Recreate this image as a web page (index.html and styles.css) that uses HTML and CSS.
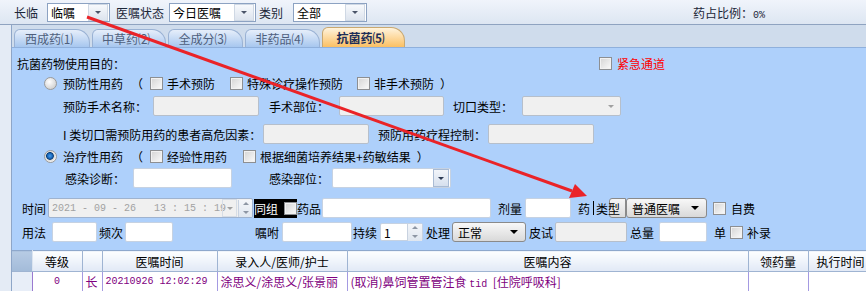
FILE: index.html
```html
<!DOCTYPE html>
<html lang="zh-CN">
<head>
    <meta charset="UTF-8">
    <link rel="stylesheet" href="styles.css">
</head>
<body>
    <div class="topbar">
        <span class="lbl">长临</span>
        <div class="combo c-type"><span>临嘱</span><i class="drop"></i></div>
        <span class="lbl ml6">医嘱状态</span>
        <div class="combo c-state"><span>今日医嘱</span><i class="drop"></i></div>
        <span class="lbl ml3">类别</span>
        <div class="combo c-cat"><span>全部</span><i class="drop"></i></div>
        <span class="ratio">药占比例：<span class="mono">0%</span></span>
    </div>

    <div class="wrap">
        <div class="side"></div>
        <div class="main">
            <!-- tab strip -->
            <div class="tabs">
                <div class="tab t1">西成药⑴</div>
                <div class="tab t2">中草药⑵</div>
                <div class="tab t3">全成分⑶</div>
                <div class="tab t4">非药品⑷</div>
                <div class="tab active">抗菌药⑸</div>
            </div>

            <div class="panel">
                <div class="row r1">
                    <span>抗菌药物使用目的：</span>
                    <i class="cb ml474"></i>
                    <span class="urgent">紧急通道</span>
                </div>
                <div class="row r2">
                    <i class="radio"></i>
                    <span class="ml6">预防性用药</span>
                    <span class="ml8">（</span>
                    <i class="cb ml7"></i><span class="ml4">手术预防</span>
                    <i class="cb ml15"></i><span class="ml4">特殊诊疗操作预防</span>
                    <i class="cb ml14"></i><span class="ml4">非手术预防</span>
                    <span class="ml6">）</span>
                </div>
                <div class="row r3">
                    <span class="w90">预防手术名称：</span>
                    <span class="field off w106"></span>
                    <span class="ml10 w70">手术部位：</span>
                    <span class="field off w105"></span>
                    <span class="ml9 w69">切口类型：</span>
                    <span class="field off w99 pick"><i class="tri grey"></i></span>
                </div>
                <div class="row r4">
                    <span class="w200">I 类切口需预防用药的患者高危因素：</span>
                    <span class="field off w106"></span>
                    <span class="ml9 w110">预防用药疗程控制：</span>
                    <span class="field off w106"></span>
                </div>
                <div class="row r5">
                    <i class="radio on"></i>
                    <span class="ml6">治疗性用药</span>
                    <span class="ml8">（</span>
                    <i class="cb ml7"></i><span class="ml4">经验性用药</span>
                    <i class="cb ml16"></i><span class="ml4">根据细菌培养结果+药敏结果</span>
                    <span class="ml6">）</span>
                </div>
                <div class="row r6">
                    <span class="w68">感染诊断：</span>
                    <span class="field w99"></span>
                    <span class="ml37 w63">感染部位：</span>
                    <span class="field w119 pick"><i class="btn"><i class="tri"></i></i></span>
                </div>
                <div class="row r7">
                    <span class="w26">时间</span>
                    <span class="field date">
                        <span class="stamp">2021 - 09 - 26&nbsp;&nbsp;&nbsp;13 : 15 : 19</span>
                        <i class="dbtn"><i class="tri grey"></i></i>
                        <i class="spin"><i class="up"></i><i class="down"></i></i>
                    </span>
                    <span class="group ml1"><span>同组</span><i class="cb"></i></span>
                    <span class="w25">药品</span>
                    <span class="field w169"></span>
                    <span class="ml7 w27">剂量</span>
                    <span class="field w46"></span>
                    <span class="ml7">药</span><i class="caret"></i>
                    <span class="mini"></span>
                    <span class="overlap">类型</span>
                    <span class="sel w79 ml6">普通医嘱<i class="tri dark"></i></span>
                    <i class="cb ml6"></i>
                    <span class="ml5">自费</span>
                </div>
                <div class="row r8">
                    <span class="w30">用法</span>
                    <span class="field w45"></span>
                    <span class="ml2 w26">频次</span>
                    <span class="field w48"></span>
                    <span class="ml82 w27">嘱咐</span>
                    <span class="field w70"></span>
                    <span class="ml1 w27">持续</span>
                    <span class="field w43 num">1<i class="spin"><i class="up"></i><i class="down"></i></i></span>
                    <span class="ml3 w26">处理</span>
                    <span class="sel w72">正常<i class="tri dark"></i></span>
                    <span class="ml3 w26">皮试</span>
                    <span class="field off w72"></span>
                    <span class="ml3 w29">总量</span>
                    <span class="field w48"></span>
                    <span class="ml7 w16">单</span>
                    <i class="cb"></i>
                    <span class="ml4">补录</span>
                </div>
            </div>

            <table class="grid">
                <colgroup>
                    <col class="c0"><col class="c1"><col class="c2"><col class="c3">
                    <col class="c4"><col class="c5"><col class="c6"><col class="c7">
                </colgroup>
                <tr>
                    <th class="corner"></th>
                    <th>等级</th>
                    <th></th>
                    <th>医嘱时间</th>
                    <th>录入人/医师/护士</th>
                    <th>医嘱内容</th>
                    <th>领药量</th>
                    <th class="cut">执行时间</th>
                </tr>
                <tr>
                    <td class="corner"></td>
                    <td class="mid mono">0</td>
                    <td>长</td>
                    <td class="mono">20210926 12:02:29</td>
                    <td>涂思义/涂思义/张景丽</td>
                    <td>(取消)鼻饲管置管注食 <span class="mono">tid</span>&nbsp;&nbsp;[住院呼吸科]</td>
                    <td></td>
                    <td></td>
                </tr>
            </table>
        </div>
    </div>

    <!-- red annotation arrow drawn over the screenshot -->
    <svg class="arrow" width="866" height="291" viewBox="0 0 866 291">
        <line x1="87" y1="17" x2="572" y2="191" stroke="#ea2328" stroke-width="3"/>
        <polygon points="587,196 569,198 575,184" fill="#ea2328"/>
    </svg>
</body>
</html>
```

FILE: styles.css
```css
body {
    margin: 0;
    width: 866px;
    height: 291px;
    overflow: hidden;
    position: relative;
    font-family: "Noto Sans CJK SC", sans-serif;
    font-size: 12px;
    color: #000;
    background-color: #e3eaf4;
}
i {
    display: block;
    flex: none;
}
.mono {
    font-family: "Liberation Mono", monospace;
    font-size: 10px;
}

/* top filter bar */
.topbar {
    height: 24px;
    border-bottom: 1px solid #8fa3c0;
    background: linear-gradient(#f0f4fb, #dde6f2);
    display: flex;
    align-items: center;
    padding-left: 14px;
}
.lbl {
    color: #1b2638;
}
.combo {
    height: 17px;
    border: 1px solid #8ca2c2;
    background-color: #fff;
    display: flex;
    align-items: center;
    justify-content: space-between;
    padding-left: 3px;
    margin-top: 1px;
}
.combo .drop {
    width: 18px;
    height: 15px;
    margin-right: 1px;
    border: 1px solid #cfd8e4;
    background: linear-gradient(#f7f9fc, #dde4ee);
    position: relative;
}
.combo .drop::after {
    content: "";
    position: absolute;
    left: 6px;
    top: 6px;
    border-left: 3px solid transparent;
    border-right: 3px solid transparent;
    border-top: 3px solid #4a5468;
}
.c-type { width: 58px; margin-left: 9px; }
.c-state { width: 82px; margin-left: 5px; }
.c-cat { width: 69px; margin-left: 10px; }
.ratio {
    margin-left: 326px;
    color: #1b2638;
}

.wrap {
    display: flex;
}
.side {
    width: 11px;
    height: 266px;
    border-right: 1px solid #8ea6c8;
    background-color: #e4ebf5;
}
.main {
    width: 854px;
    overflow: hidden;
    background-color: #cfdcec;
}

/* tabs */
.tabs {
    height: 22px;
    display: flex;
    align-items: flex-end;
    padding-left: 2px;
}
.tab {
    height: 18px;
    margin-right: 2px;
    border: 1px solid #9ab2d4;
    border-bottom: none;
    border-radius: 6px 14px 0 0;
    background: linear-gradient(#e6eefa, #a7c7ef);
    color: #4f5f7c;
    display: flex;
    align-items: center;
    justify-content: center;
    padding-right: 6px;
    box-sizing: border-box;
}
.t1 { width: 76px; }
.t2 { width: 74px; }
.t3 { width: 75px; }
.t4 { width: 75px; }
.tab.active {
    width: 83px;
    height: 20px;
    border-color: #c9a870;
    background: linear-gradient(#fff3dc, #fbc063);
    color: #1c2e58;
    font-weight: bold;
}

/* antibacterial panel */
.panel {
    height: 202px;
    border-top: 1px solid #8fb0dc;
    background-color: #aed0fb;
}
.row {
    height: 20px;
    display: flex;
    align-items: center;
    white-space: nowrap;
}
.r1 { margin-top: 5px; padding-left: 5px; }
.r2 { padding-left: 32px; }
.r3 { margin-top: 3px; padding-left: 51px; }
.r4 { margin-top: 8px; padding-left: 51px; }
.r5 { margin-top: 2px; padding-left: 32px; }
.r6 { margin-top: 2px; padding-left: 53px; }
.r7 { margin-top: 10px; padding-left: 10px; }
.r8 { margin-top: 4px; padding-left: 10px; }

.urgent {
    color: #ff0000;
    margin-left: 5px;
}

.cb {
    width: 11px;
    height: 11px;
    border: 1px solid #8d8f92;
    background: linear-gradient(135deg, #d4d4d4, #fbfbfb);
    box-shadow: inset 0 0 0 1px #f2f2f2;
}
.radio {
    width: 11px;
    height: 11px;
    border-radius: 50%;
    border: 1px solid #9b9b9b;
    background: radial-gradient(circle at 40% 35%, #ffffff, #c4c4c4);
}
.radio.on {
    background: radial-gradient(circle at 45% 45%, #47a0f0 0, #1a66b8 2.5px, #0a3f78 3.5px, #d8d8d8 4.2px, #f4f4f4 6px);
}

.field {
    height: 18px;
    border: 1px solid #c6d2e2;
    border-radius: 2px;
    background-color: #fff;
    flex: none;
    display: flex;
    align-items: center;
    position: relative;
}
.field.off {
    background-color: #f0f0f0;
    border-color: #b6bfcb;
}
.field.pick {
    justify-content: flex-end;
}
.field .btn {
    width: 14px;
    height: 16px;
    margin-right: 1px;
    border: 1px solid #a9bbd4;
    background: linear-gradient(#f2f5fa, #d6e0ee);
    display: flex;
    align-items: center;
    justify-content: center;
}
.tri {
    width: 0;
    height: 0;
    border-left: 3px solid transparent;
    border-right: 3px solid transparent;
    border-top: 3px solid #2c3a55;
}
.tri.grey {
    border-top-color: #a0a0a0;
    margin-right: 6px;
}
.tri.dark {
    border-left-width: 4px;
    border-right-width: 4px;
    border-top: 4px solid #000;
}

.date {
    width: 200px;
    padding-left: 3px;
    background-color: #f0f0f0;
    border-color: #9fb3cf;
    color: #a2a2a2;
    overflow: hidden;
}
.stamp {
    font-family: "Liberation Mono", monospace;
    font-size: 10px;
    flex: none;
    width: 170px;
}
.dbtn {
    width: 13px;
    height: 16px;
    border: 1px solid #d6dde6;
    display: flex;
    align-items: center;
    justify-content: center;
}
.dbtn .tri.grey {
    margin-right: 0;
}
.spin {
    width: 14px;
    height: 17px;
    border-left: 1px solid #c8d2e0;
    background: linear-gradient(#f4f6fa, #dfe6ef);
    display: flex;
    flex-direction: column;
    justify-content: space-around;
    align-items: center;
    margin-left: 1px;
}
.spin .up {
    border-left: 3px solid transparent;
    border-right: 3px solid transparent;
    border-bottom: 3px solid #8d96a4;
}
.spin .down {
    border-left: 3px solid transparent;
    border-right: 3px solid transparent;
    border-top: 3px solid #8d96a4;
}
.num {
    justify-content: space-between;
    padding-left: 3px;
    box-sizing: border-box;
    width: 43px;
}

.group {
    width: 43px;
    height: 19px;
    background-color: #000;
    color: #fff;
    display: flex;
    align-items: center;
    flex: none;
}
.group .cb {
    margin-left: 6px;
}

.caret {
    width: 1px;
    height: 14px;
    margin-left: 3px;
    background-color: #000;
}
.mini {
    width: 15px;
    height: 18px;
    margin-left: 15px;
    border: 1px solid #8a8a8a;
    border-radius: 3px 0 0 3px;
    background: linear-gradient(#f6f6f6, #dcdcdc);
    flex: none;
}
.overlap {
    margin-left: -30px;
    position: relative;
}

.sel {
    height: 18px;
    border: 1px solid #8a8a8a;
    border-radius: 3px;
    background: linear-gradient(#f8f8f8, #d9d9d9);
    display: flex;
    align-items: center;
    justify-content: space-between;
    padding: 0 7px 0 5px;
    box-sizing: content-box;
    flex: none;
}
.sel.w79 { width: 67px; }
.sel.w72 { width: 60px; }

/* grid */
.grid {
    border-collapse: collapse;
    table-layout: fixed;
    width: 858px;
    border-top: 1px solid #8ea8cc;
}
.c0 { width: 20px; }
.c1 { width: 50px; }
.c2 { width: 20px; }
.c3 { width: 115px; }
.c4 { width: 130px; }
.c5 { width: 401px; }
.c6 { width: 60px; }
.c7 { width: 62px; }
.grid th {
    height: 20px;
    padding: 0;
    font-weight: normal;
    border-right: 1px solid #9fb4d2;
    border-bottom: 1px solid #9fb4d2;
    background: linear-gradient(#fdfeff, #e1e9f6);
    white-space: nowrap;
    overflow: hidden;
}
.grid th.corner {
    background: linear-gradient(#b7cbe4, #a3bbd9);
    border-right-color: #dbe4f0;
}
.grid th.cut {
    text-align: left;
    padding-left: 8px;
}
.grid td {
    height: 19px;
    padding: 0 0 0 3px;
    color: #800080;
    background-color: #fff;
    border-right: 1px solid #a49ae2;
    white-space: nowrap;
    overflow: hidden;
}
.grid td.corner {
    background-color: #e8eef8;
    border-right-color: #9a7ad0;
}
.grid td.mid {
    text-align: center;
    padding: 0;
}
.grid td.mono {
    font-size: 10px;
}

/* spacing helpers */
.ml1 { margin-left: 1px; }
.ml2 { margin-left: 2px; }
.ml3 { margin-left: 3px; }
.ml4 { margin-left: 4px; }
.ml5 { margin-left: 5px; }
.ml6 { margin-left: 6px; }
.ml7 { margin-left: 7px; }
.ml8 { margin-left: 8px; }
.ml9 { margin-left: 9px; }
.ml10 { margin-left: 10px; }
.ml14 { margin-left: 14px; }
.ml15 { margin-left: 15px; }
.ml16 { margin-left: 16px; }
.ml37 { margin-left: 37px; }
.ml82 { margin-left: 82px; }
.ml474 { margin-left: 474px; }

/* fixed widths */
.w16 { width: 16px; flex: none; }
.w25 { width: 25px; flex: none; }
.w26 { width: 26px; flex: none; }
.w27 { width: 27px; flex: none; }
.w29 { width: 29px; flex: none; }
.w30 { width: 30px; flex: none; }
.w63 { width: 63px; flex: none; }
.w68 { width: 68px; flex: none; }
.w69 { width: 69px; flex: none; }
.w70 { width: 70px; flex: none; }
.w90 { width: 90px; flex: none; }
.w110 { width: 110px; flex: none; }
.w200 { width: 200px; flex: none; }
.field.w45 { width: 43px; }
.field.w46 { width: 44px; }
.field.w48 { width: 46px; }
.field.w70 { width: 68px; }
.field.w72 { width: 70px; }
.field.w99 { width: 97px; }
.field.w105 { width: 103px; }
.field.w106 { width: 104px; }
.field.w119 { width: 117px; }
.field.w169 { width: 167px; }

.arrow {
    position: absolute;
    left: 0;
    top: 0;
    pointer-events: none;
}
```
